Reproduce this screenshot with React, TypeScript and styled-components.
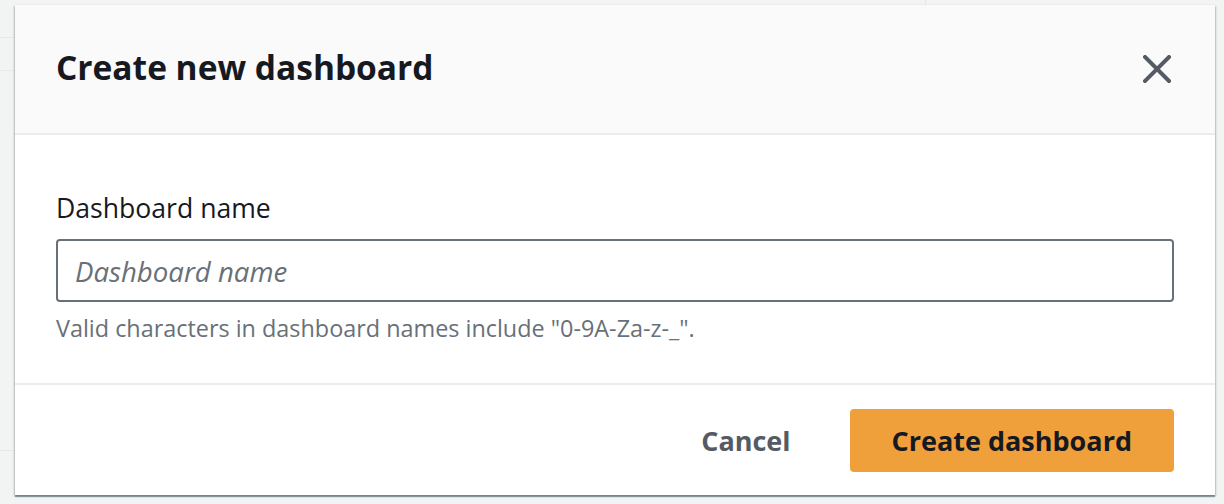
import styled, { createGlobalStyle } from 'styled-components';

const GlobalStyle = createGlobalStyle`
  html, body {
    margin: 0;
    padding: 0;
    background: #f2f3f3;
  }
  body {
    font-family: 'Open Sans', 'Noto Sans', 'Liberation Sans', sans-serif;
    -webkit-font-smoothing: antialiased;
  }
`;

const Page = styled.div`
  position: relative;
  width: 1224px;
  height: 504px;
  overflow: hidden;
  background-color: #f2f3f3;
  background-image:
    linear-gradient(#e6e8e8, #e6e8e8),
    linear-gradient(#e9ebeb, #e9ebeb),
    linear-gradient(#e6e8e8, #e6e8e8),
    linear-gradient(#e6e8e8, #e6e8e8);
  background-size: 14px 1px, 14px 1px, 14px 1px, 1px 5px;
  background-position: 0 37px, 0 70px, 0 450px, 925px 0;
  background-repeat: no-repeat;
`;

const Modal = styled.div`
  position: absolute;
  top: 5px;
  left: 15px;
  width: 1200px;
  height: 490px;
  display: flex;
  flex-direction: column;
  background: #ffffff;
  box-shadow:
    0 2px 1px 0 rgba(0, 28, 36, 0.35),
    1px 1px 2px 0 rgba(0, 28, 36, 0.2),
    -1px 1px 2px 0 rgba(0, 28, 36, 0.2);
`;

const Header = styled.div`
  height: 128px;
  display: flex;
  align-items: center;
  justify-content: space-between;
  padding: 0 38px 0 41px;
  background: #fafafa;
  border-bottom: 2px solid #eaeded;
`;

const Title = styled.h2`
  margin: 0 0 4px 0;
  font-size: 33.5px;
  font-weight: 700;
  color: #16191f;
`;

const CloseButton = styled.button`
  width: 40px;
  height: 40px;
  display: flex;
  align-items: center;
  justify-content: center;
  padding: 0;
  border: none;
  background: transparent;
  color: #545b64;
  cursor: pointer;
`;

const Body = styled.div`
  flex: 1;
  display: flex;
  flex-direction: column;
  padding: 55px 41px 0 41px;
`;

const Label = styled.label`
  font-size: 26.6px;
  line-height: 36px;
  color: #16191f;
  margin-bottom: 13px;
`;

const Input = styled.input`
  box-sizing: border-box;
  width: 100%;
  height: 63px;
  padding: 0 17px;
  border: 2px solid #687078;
  border-radius: 4px;
  font-family: inherit;
  font-size: 27.6px;
  color: #16191f;
  background: #ffffff;
  outline: none;

  &::placeholder {
    color: #687078;
    font-style: italic;
    opacity: 1;
  }
`;

const Hint = styled.div`
  margin-top: 10px;
  font-size: 23.4px;
  line-height: 32px;
  color: #687078;
`;

const Footer = styled.div`
  height: 110px;
  display: flex;
  align-items: center;
  justify-content: flex-end;
  gap: 59px;
  padding: 0 41px;
  border-top: 2px solid #eaeded;
`;

const TextButton = styled.button`
  border: none;
  background: transparent;
  padding: 0;
  font-family: inherit;
  font-size: 27px;
  font-weight: 700;
  color: #545b64;
  cursor: pointer;
`;

const PrimaryButton = styled.button`
  height: 63px;
  padding: 0 42px;
  border: none;
  border-radius: 4px;
  background: #f0a03b;
  font-family: inherit;
  font-size: 27px;
  font-weight: 700;
  color: #16191f;
  cursor: pointer;
`;

export default function App() {
  return (
    <>
      <GlobalStyle />
      <Page>
        <Modal>
          <Header>
            <Title>Create new dashboard</Title>
            <CloseButton aria-label="Close">
              <svg width="28" height="28" viewBox="0 0 28 28" fill="none">
                <path
                  d="M2 2 L26 26 M26 2 L2 26"
                  stroke="currentColor"
                  strokeWidth="4"
                  strokeLinecap="square"
                />
              </svg>
            </CloseButton>
          </Header>
          <Body>
            <Label htmlFor="dashboard-name">Dashboard name</Label>
            <Input id="dashboard-name" placeholder="Dashboard name" />
            <Hint>Valid characters in dashboard names include "0-9A-Za-z-_".</Hint>
          </Body>
          <Footer>
            <TextButton>Cancel</TextButton>
            <PrimaryButton>Create dashboard</PrimaryButton>
          </Footer>
        </Modal>
      </Page>
    </>
  );
}
